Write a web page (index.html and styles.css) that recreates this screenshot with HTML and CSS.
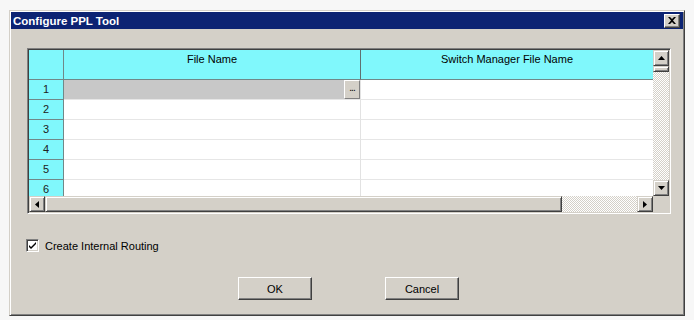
FILE: index.html
```html
<!DOCTYPE html>
<html>
<head>
<meta charset="utf-8">
<title>Configure PPL Tool</title>
<link rel="stylesheet" href="styles.css">
</head>
<body>

<div class="dialog">
<div class="titlebar">
    <span class="title">Configure PPL Tool</span>
    <span class="close"><svg width="8" height="7" viewBox="0 0 8 7"><path d="M0 0L2 0L4 2L6 0L8 0L5 3.5L8 7L6 7L4 5L2 7L0 7L3 3.5Z" fill="#000"/></svg></span>
</div>

<div class="content">
<div class="grid">
    <div class="grid-main">
        <div class="cells">
            <div class="row head"><div class="rh"></div><div class="c1">File Name</div><div class="c2">Switch Manager File Name</div></div>
            <div class="row"><div class="rh">1</div><div class="c1 sel"><span class="dots">...</span></div><div class="c2"></div></div>
            <div class="row"><div class="rh">2</div><div class="c1"></div><div class="c2"></div></div>
            <div class="row"><div class="rh">3</div><div class="c1"></div><div class="c2"></div></div>
            <div class="row"><div class="rh">4</div><div class="c1"></div><div class="c2"></div></div>
            <div class="row"><div class="rh">5</div><div class="c1"></div><div class="c2"></div></div>
            <div class="row"><div class="rh">6</div><div class="c1"></div><div class="c2"></div></div>
        </div>
        <div class="vscroll">
            <div class="sb-btn"><svg width="7" height="4" viewBox="0 0 7 4"><path d="M3.5 0L7 4L0 4Z" fill="#000"/></svg></div>
            <div class="vthumb"></div>
            <div class="track"></div>
            <div class="sb-btn"><svg width="7" height="4" viewBox="0 0 7 4"><path d="M0 0L7 0L3.5 4Z" fill="#000"/></svg></div>
        </div>
    </div>
    <div class="hscroll">
        <div class="sb-btn"><svg width="4" height="7" viewBox="0 0 4 7"><path d="M4 0L4 7L0 3.5Z" fill="#000"/></svg></div>
        <div class="hthumb"></div>
        <div class="track"></div>
        <div class="sb-btn"><svg width="4" height="7" viewBox="0 0 4 7"><path d="M0 0L4 3.5L0 7Z" fill="#000"/></svg></div>
        <div class="corner"></div>
    </div>
</div>

<label class="check"><span class="box"><svg width="9" height="9" viewBox="0 0 9 9"><path d="M1 4L3 6L8 1L8 3L3 8L1 6Z" fill="#000"/></svg></span>Create Internal Routing</label>

<div class="buttons">
    <button type="button">OK</button>
    <button type="button">Cancel</button>
</div>
</div>
</div>

</body>
</html>
```

FILE: styles.css
```css
body {margin:0; background:#f7f7f7; font:11px "Liberation Sans", Arial, sans-serif; color:#000;}
/* window frame */
.dialog {margin:10px 0 0 9px; width:676px; height:306px; box-sizing:border-box; background:#d4d0c8; border:1px solid; border-color:#d4d0c8 #404040 #404040 #d4d0c8; box-shadow:inset 1px 1px #fff, inset -1px -1px #808080, 0 1px #808080; padding:1px; display:flex; flex-direction:column;}
.titlebar {height:17px; background:#0c2373; display:flex; align-items:center; justify-content:space-between; padding:0 3px 0 2px;}
.title {color:#fff; font:bold 11.5px "Liberation Sans", Arial, sans-serif;}
.close {width:16px; height:14px; box-sizing:border-box; background:#d4d0c8; border:1px solid; border-color:#fff #404040 #404040 #fff; box-shadow:inset -1px -1px #808080; display:flex; align-items:center; justify-content:center;}
.content {padding:19px 0 0 16px;}
/* grid */
.grid {width:644px; box-sizing:border-box; border:1px solid; border-color:#808080 #fff #fff #808080; box-shadow:inset 1px 1px #404040, inset -1px -1px #d4d0c8; padding:1px;}
.grid-main {display:flex;}
.cells {width:624px; height:146px; overflow:hidden; background:#fff;}
.row {display:flex; height:20px;}
.row > div {box-sizing:border-box; height:100%;}
.rh {width:35px; background:#80f8fc; border-right:1px solid #708888; border-bottom:1px solid #708888; text-align:center; line-height:19px; color:#202020;}
.c1 {width:297px; border-right:1px solid #e2e2e2; border-bottom:1px solid #e6e6e6;}
.c2 {width:292px; border-bottom:1px solid #e6e6e6;}
.head {height:30px;}
.head .c1, .head .c2 {background:#80f8fc; text-align:center; padding-top:3px; border-bottom:1px solid #708888;}
.head .c1 {border-right:1px solid #607070;}
.c1.sel {background:#c8c8c8; display:flex; justify-content:flex-end;}
.dots {width:16px; height:19px; box-sizing:border-box; background:#d4d0c8; border:1px solid; border-color:#fff #808080 #808080 #fff; text-align:center; font-size:10px; line-height:14px; letter-spacing:-1px;}
/* scrollbars */
.vscroll {width:16px; height:146px; display:flex; flex-direction:column;}
.hscroll {display:flex; height:16px;}
.sb-btn {width:16px; height:16px; flex:none; box-sizing:border-box; background:#d4d0c8; border:1px solid; border-color:#d4d0c8 #404040 #404040 #d4d0c8; box-shadow:inset 1px 1px #fff, inset -1px -1px #808080; display:flex; align-items:center; justify-content:center;}
.track {flex:1; background:repeating-conic-gradient(#fff 0 25%, #d4d0c8 0 50%) 0 0/2px 2px;}
.vthumb {height:6px; flex:none; box-sizing:border-box; background:#d4d0c8; border:1px solid; border-color:#d4d0c8 #404040 #404040 #d4d0c8; box-shadow:inset 1px 1px #fff, inset -1px -1px #808080;}
.hthumb {width:517px; flex:none; box-sizing:border-box; background:#d4d0c8; border:1px solid; border-color:#d4d0c8 #404040 #404040 #d4d0c8; box-shadow:inset 1px 1px #fff, inset -1px -1px #808080;}
.corner {width:16px; background:#d4d0c8;}
/* checkbox and buttons */
.check {display:flex; align-items:center; gap:6px; margin:25px 0 0 -1px; height:13px;}
.box {width:13px; height:13px; box-sizing:border-box; background:#fff; border:1px solid; border-color:#808080 #fff #fff #808080; box-shadow:inset 1px 1px #404040, inset -1px -1px #d4d0c8; display:flex; align-items:center; justify-content:center;}
.buttons {display:flex; gap:73px; margin:25px 0 0 211px;}
.buttons button {width:74px; height:23px; font:11px "Liberation Sans", Arial, sans-serif; color:#000; background:#d4d0c8; border:1px solid; border-color:#fff #404040 #404040 #fff; box-shadow:inset -1px -1px #808080; padding:0;}
```
